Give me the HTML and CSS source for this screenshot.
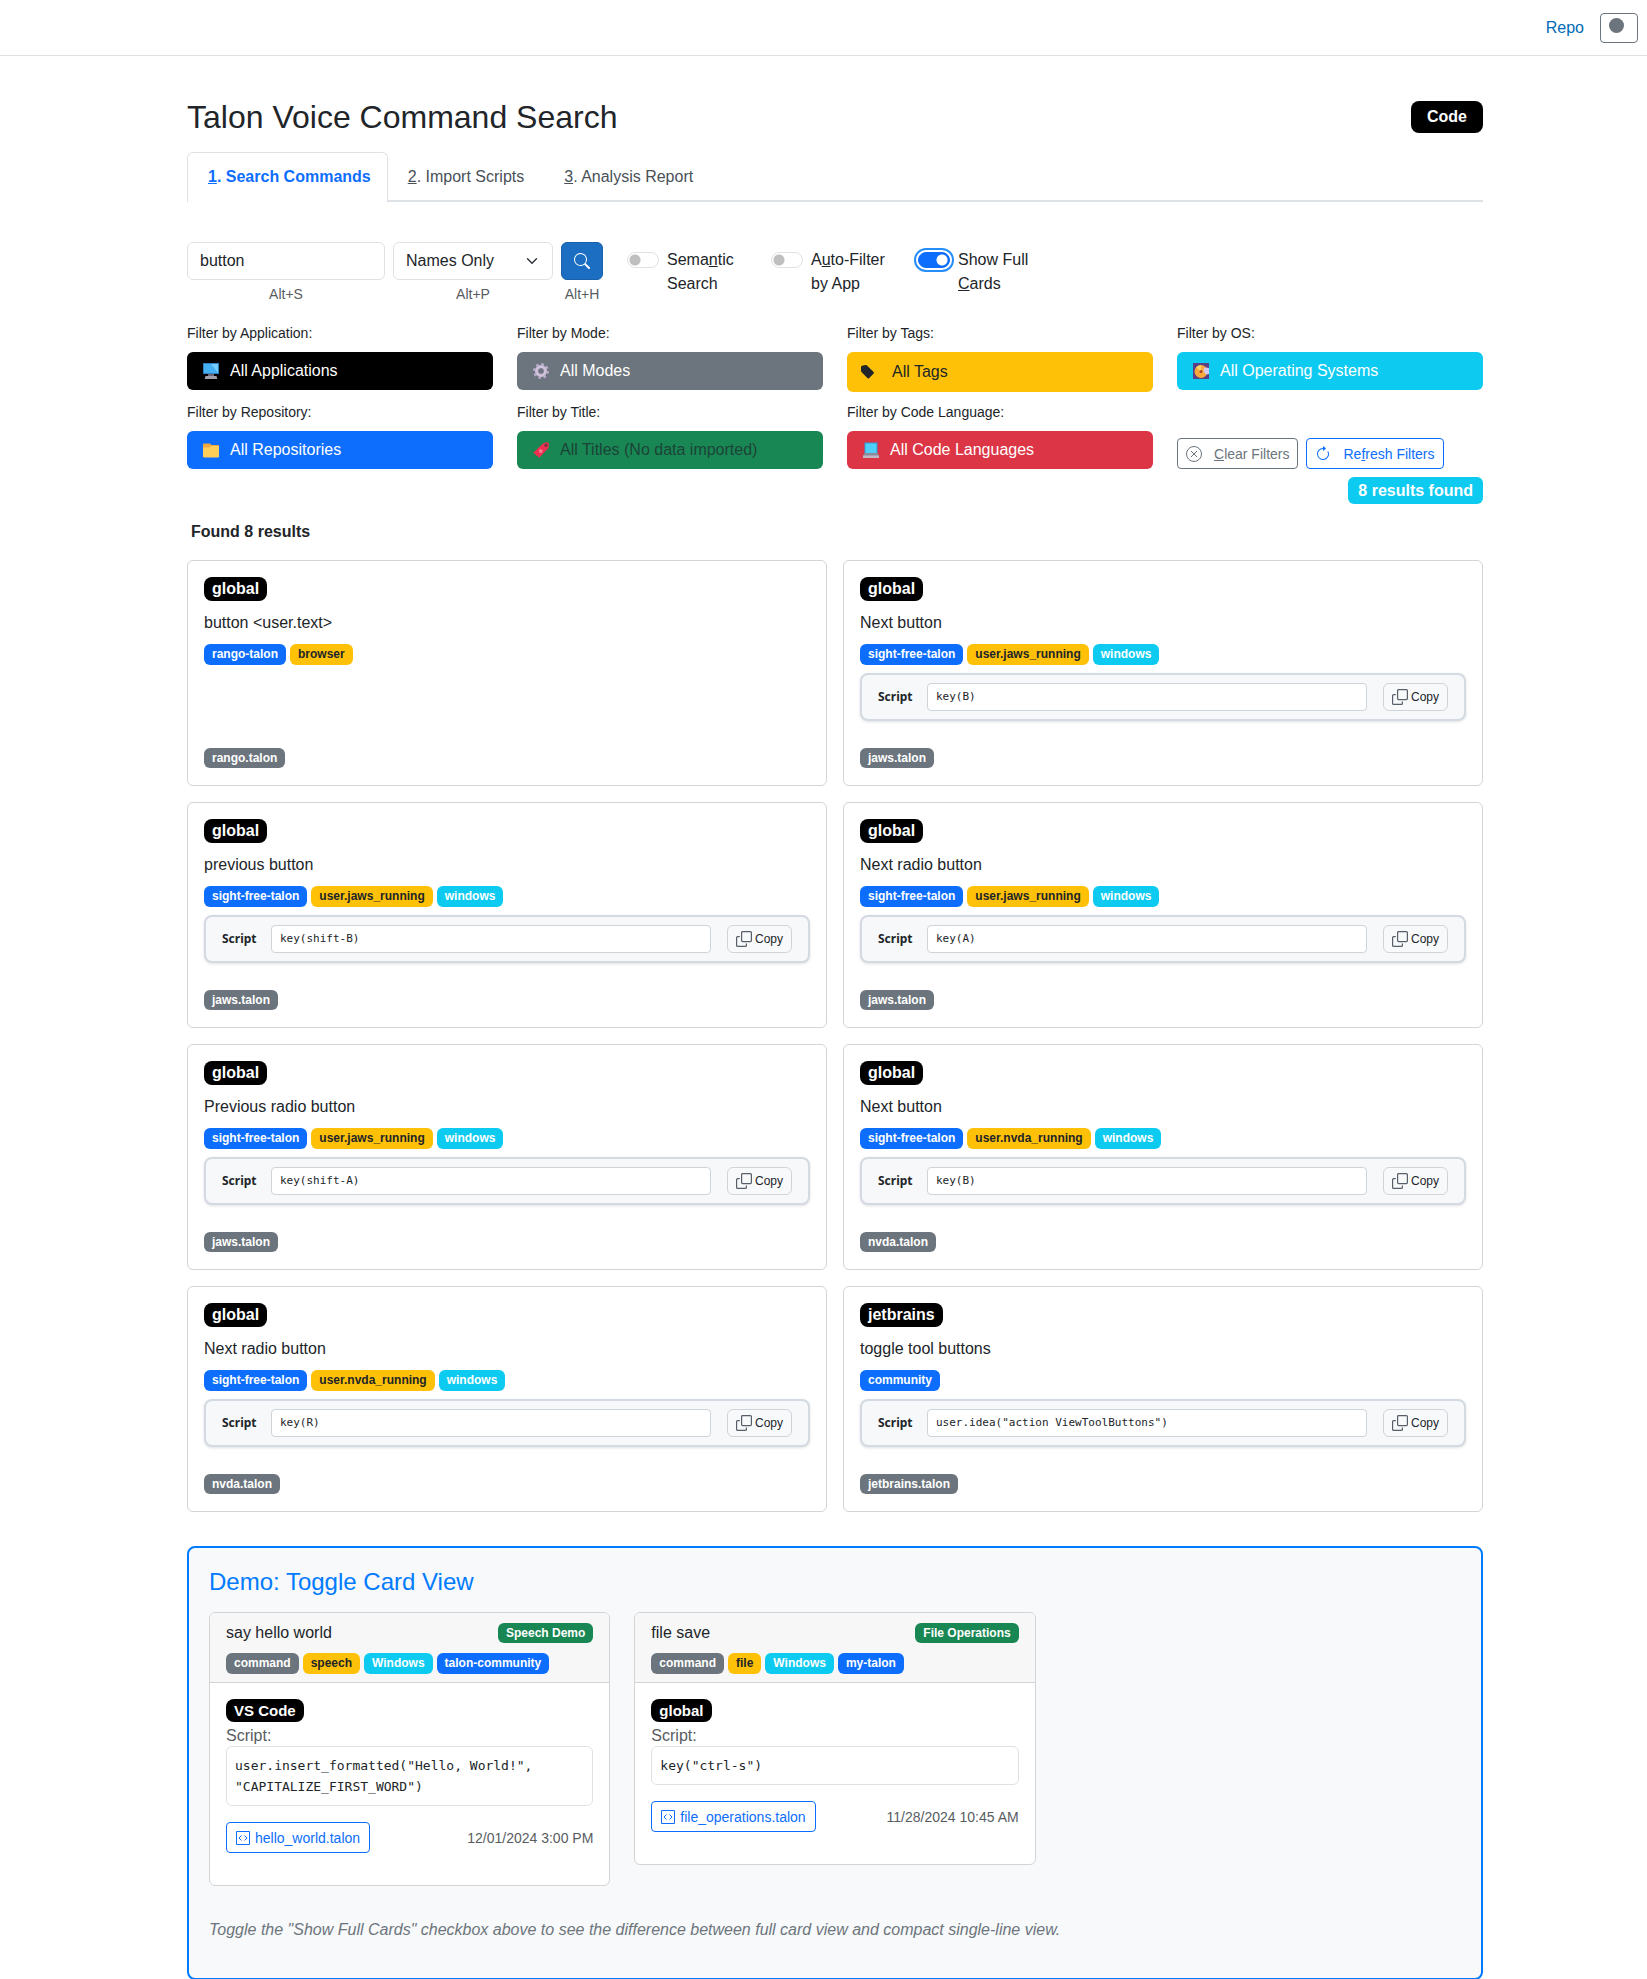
FILE: index.html
```html
<!DOCTYPE html>
<html lang="en">
<head>
<meta charset="utf-8">
<meta name="viewport" content="width=device-width, initial-scale=1">
<title>Talon Voice Command Search</title>
<link rel="stylesheet" href="styles.css">
</head>
<body>
<svg class="sprite" aria-hidden="true">
  <symbol id="copy" viewBox="0 0 16 16"><path fill="none" stroke="currentColor" stroke-width="1.2" d="M5.6.6h8.8a1 1 0 0 1 1 1v8a1 1 0 0 1-1 1H6.600a1 1 0 0 1-1-1v-8a1 1 0 0 1 1-1zM3.800 5.600H1.600a1 1 0 0 0-1 1v7.800a1 1 0 0 0 1 1h7.800a1 1 0 0 0 1-1v-1.900"/></symbol>
  <symbol id="code-file" viewBox="0 0 14 14"><path fill="none" stroke="currentColor" d="M.5.5h13v13H.5zM5.500 4.500L3 7l2.500 2.500M8.500 4.500L11 7 8.500 9.500"/></symbol>
</svg>

<header class="topbar">
  <a class="repo-link" href="#repo">Repo</a>
  <button class="theme-button" type="button" aria-label="Toggle theme"><svg width="15" height="15" viewBox="0 0 15 15"><circle cx="7.500" cy="7.500" r="7.500" fill="#6c757d"/></svg></button>
</header>

<main class="page">
  <div class="container">
    <div class="title-row">
      <h1>Talon Voice Command Search</h1>
      <button class="code-button" type="button">Code</button>
    </div>

    <nav class="tabs">
      <a class="tab active" href="#search"><u>1</u>. Search Commands</a>
      <a class="tab" href="#import"><u>2</u>. Import Scripts</a>
      <a class="tab" href="#report"><u>3</u>. Analysis Report</a>
    </nav>

    <form class="search-row">
      <div class="field field-term">
        <input class="control" type="text" value="button" aria-label="Search term">
        <span class="hint">Alt+S</span>
      </div>
      <div class="field field-scope">
        <select class="control select" aria-label="Search scope"><option>Names Only</option></select>
        <span class="hint">Alt+P</span>
      </div>
      <div class="field">
        <button class="search-button" type="button" aria-label="Search"><svg width="16" height="16" viewBox="0 0 16 16" fill="#fff"><path d="M11.742 10.344a6.500 6.500 0 1 0-1.397 1.398h-.001c.03.04.062.078.098.115l3.850 3.850a1 1 0 0 0 1.415-1.414l-3.850-3.850a1.007 1.007 0 0 0-.115-.1zM12 6.500a5.500 5.500 0 1 1-11 0 5.500 5.500 0 0 1 11 0z"/></svg></button>
        <span class="hint">Alt+H</span>
      </div>
      <div class="switches">
        <div class="switch"><input type="checkbox" id="semantic"><label for="semantic">Sema<u>n</u>tic<br>Search</label></div>
        <div class="switch"><input type="checkbox" id="auto"><label for="auto">A<u>u</u>to-Filter<br>by App</label></div>
        <div class="switch"><input class="focused" type="checkbox" id="full" checked><label for="full">Show Full<br><u>C</u>ards</label></div>
      </div>
    </form>

    <section class="filters">
      <div class="filter">
        <label for="f-app">Filter by Application:</label>
        <button id="f-app" class="filter-button black" type="button"><svg width="16" height="16" viewBox="0 0 16 16"><path fill="#2f7fc0" d="M0 0h16v11H0z"/><path fill="#45b0f4" d="M1 1h14v9H1z"/><path fill="#76cdff" d="M8 1h7v9z"/><path fill="#6d6a78" d="M5 11h6v2H5z"/><path fill="#a29eac" d="M2.500 13h11l.8 3H1.700z"/></svg>All Applications</button>
      </div>
      <div class="filter">
        <label for="f-mode">Filter by Mode:</label>
        <button id="f-mode" class="filter-button gray" type="button"><svg width="16" height="16" viewBox="0 0 16 16" fill="none"><circle cx="8" cy="8" r="6.800" stroke="#b9a9cc" stroke-width="2.400" stroke-dasharray="2.700 2.640"/><circle cx="8" cy="8" r="4.300" stroke="#cdc2da" stroke-width="3.400"/><circle cx="8" cy="8" r="2.600" stroke="#8b7f99"/></svg>All Modes</button>
      </div>
      <div class="filter">
        <label for="f-tags">Filter by Tags:</label>
        <button id="f-tags" class="filter-button tall yellow" type="button"><svg width="13" height="14" viewBox="0 0 13 14"><path fill="#212529" d="M0 2Q0 1 1 .700L4.500 0q.9-.1 1.500.600L12.600 7q.6.700.1 1.400L8 13.300q-.7.600-1.400 0L.7 7.200Q0 6.500 0 5.500z"/></svg>All Tags</button>
      </div>
      <div class="filter">
        <label for="f-os">Filter by OS:</label>
        <button id="f-os" class="filter-button cyan" type="button"><svg width="16" height="16" viewBox="0 0 16 16"><path fill="#5a3f86" d="M0 0h16v16H0z"/><circle cx="8" cy="8.500" r="6.500" fill="#f9a83c"/><path fill="#ffd36b" d="M8 8.500L3 4.500A6.500 6.500 0 0 1 8 2z"/><circle cx="8" cy="8.500" r="1.500" fill="#a8452c"/><path fill="#d5c8ee" d="M11 5q2-1 5 0v6l-3 .5-2.500-3z"/></svg>All Operating Systems</button>
      </div>
      <div class="filter">
        <label for="f-repo">Filter by Repository:</label>
        <button id="f-repo" class="filter-button blue" type="button"><svg width="16" height="16" viewBox="0 0 16 16"><path fill="#f0a840" d="M0 2.500q0-1 1-1h6l1.500 1.500H15q1 0 1 1V9H0z"/><path fill="#ffce58" d="M0 5.500h6.500L8 4h8v10.500q0 1-1 1H1q-1 0-1-1z"/></svg>All Repositories</button>
      </div>
      <div class="filter">
        <label for="f-title">Filter by Title:</label>
        <button id="f-title" class="filter-button green" type="button" disabled><svg width="16" height="16" viewBox="0 0 16 16"><path fill="#ef2f50" d="M10 1.500l4-1.500 2 1.500-.5 4.500L6 16l-1.500-2.500L3 14l-.5-2L0 11z"/><circle cx="13" cy="3.300" r="1.700" fill="#7a3245"/><path fill="#ff8397" d="M7.500 6.500l1 1.500 1.700.300-1.200 1.200.200 1.700-1.500-.8-1.500.6.300-1.600-1-1.200 1.500-.2z"/></svg>All Titles (No data imported)</button>
      </div>
      <div class="filter">
        <label for="f-lang">Filter by Code Language:</label>
        <button id="f-lang" class="filter-button red" type="button"><svg width="16" height="16" viewBox="0 0 16 16"><path fill="#2f9fd8" d="M1.500.5h13V11h-13z"/><path fill="#4fd0fb" d="M2.500 1.500h11V11h-11z"/><path fill="#8f8a9b" d="M1.500 11h13L16 14H0z"/><path fill="#bdb9c6" d="M0 13.500h16V16H0z"/></svg>All Code Languages</button>
      </div>
      <div class="filter-actions">
        <button class="outline-button muted" type="button"><svg width="16" height="16" viewBox="0 0 16 16" fill="none" stroke="currentColor"><circle cx="8" cy="8" r="7.500"/><path d="M5 5l6 6M11 5l-6 6"/></svg><span><u>C</u>lear Filters</span></button>
        <button class="outline-button primary" type="button"><svg width="16" height="16" viewBox="0 0 16 16" fill="currentColor"><path d="M8 3a5 5 0 1 0 4.546 2.914.5.5 0 0 1 .908-.417A6 6 0 1 1 8 2z"/><path d="M8 4.466V.534a.25.25 0 0 1 .41-.192l2.360 1.966c.12.1.12.284 0 .384L8.410 4.658A.25.25 0 0 1 8 4.466z"/></svg><span>Re<u>f</u>resh Filters</span></button>
      </div>
    </section>

    <div class="count-row"><span class="count">8 results found</span></div>
    <p class="found">Found 8 results</p>

    <section class="results">
      <article class="card">
        <span class="app">global</span>
        <p class="name">button &lt;user.text&gt;</p>
        <div class="tags"><span class="tag blue">rango-talon</span><span class="tag yellow">browser</span></div>
        <div class="file"><span class="tag gray">rango.talon</span></div>
      </article>
      <article class="card">
        <span class="app">global</span>
        <p class="name">Next button</p>
        <div class="tags"><span class="tag blue">sight-free-talon</span><span class="tag yellow">user.jaws_running</span><span class="tag cyan">windows</span></div>
        <div class="script"><strong>Script</strong><code>key(B)</code><button class="copy" type="button"><svg width="16" height="16"><use href="#copy"/></svg>Copy</button></div>
        <div class="file"><span class="tag gray">jaws.talon</span></div>
      </article>
      <article class="card">
        <span class="app">global</span>
        <p class="name">previous button</p>
        <div class="tags"><span class="tag blue">sight-free-talon</span><span class="tag yellow">user.jaws_running</span><span class="tag cyan">windows</span></div>
        <div class="script"><strong>Script</strong><code>key(shift-B)</code><button class="copy" type="button"><svg width="16" height="16"><use href="#copy"/></svg>Copy</button></div>
        <div class="file"><span class="tag gray">jaws.talon</span></div>
      </article>
      <article class="card">
        <span class="app">global</span>
        <p class="name">Next radio button</p>
        <div class="tags"><span class="tag blue">sight-free-talon</span><span class="tag yellow">user.jaws_running</span><span class="tag cyan">windows</span></div>
        <div class="script"><strong>Script</strong><code>key(A)</code><button class="copy" type="button"><svg width="16" height="16"><use href="#copy"/></svg>Copy</button></div>
        <div class="file"><span class="tag gray">jaws.talon</span></div>
      </article>
      <article class="card">
        <span class="app">global</span>
        <p class="name">Previous radio button</p>
        <div class="tags"><span class="tag blue">sight-free-talon</span><span class="tag yellow">user.jaws_running</span><span class="tag cyan">windows</span></div>
        <div class="script"><strong>Script</strong><code>key(shift-A)</code><button class="copy" type="button"><svg width="16" height="16"><use href="#copy"/></svg>Copy</button></div>
        <div class="file"><span class="tag gray">jaws.talon</span></div>
      </article>
      <article class="card">
        <span class="app">global</span>
        <p class="name">Next button</p>
        <div class="tags"><span class="tag blue">sight-free-talon</span><span class="tag yellow">user.nvda_running</span><span class="tag cyan">windows</span></div>
        <div class="script"><strong>Script</strong><code>key(B)</code><button class="copy" type="button"><svg width="16" height="16"><use href="#copy"/></svg>Copy</button></div>
        <div class="file"><span class="tag gray">nvda.talon</span></div>
      </article>
      <article class="card">
        <span class="app">global</span>
        <p class="name">Next radio button</p>
        <div class="tags"><span class="tag blue">sight-free-talon</span><span class="tag yellow">user.nvda_running</span><span class="tag cyan">windows</span></div>
        <div class="script"><strong>Script</strong><code>key(R)</code><button class="copy" type="button"><svg width="16" height="16"><use href="#copy"/></svg>Copy</button></div>
        <div class="file"><span class="tag gray">nvda.talon</span></div>
      </article>
      <article class="card">
        <span class="app">jetbrains</span>
        <p class="name">toggle tool buttons</p>
        <div class="tags"><span class="tag blue">community</span></div>
        <div class="script"><strong>Script</strong><code>user.idea("action ViewToolButtons")</code><button class="copy" type="button"><svg width="16" height="16"><use href="#copy"/></svg>Copy</button></div>
        <div class="file"><span class="tag gray">jetbrains.talon</span></div>
      </article>
    </section>

    <section class="demo">
      <h2>Demo: Toggle Card View</h2>
      <div class="demo-cards">
        <article class="demo-card">
          <header>
            <div class="demo-title"><span>say hello world</span><span class="tag green">Speech Demo</span></div>
            <div class="tags"><span class="tag gray">command</span><span class="tag yellow">speech</span><span class="tag cyan">Windows</span><span class="tag blue">talon-community</span></div>
          </header>
          <div class="demo-body">
            <span class="app small">VS Code</span>
            <p class="script-label">Script:</p>
            <pre>user.insert_formatted("Hello, World!", "CAPITALIZE_FIRST_WORD")</pre>
            <div class="demo-foot">
              <a class="file-link" href="#hello"><svg width="14" height="14"><use href="#code-file"/></svg>hello_world.talon</a>
              <time>12/01/2024 3:00 PM</time>
            </div>
          </div>
        </article>
        <article class="demo-card">
          <header>
            <div class="demo-title"><span>file save</span><span class="tag green">File Operations</span></div>
            <div class="tags"><span class="tag gray">command</span><span class="tag yellow">file</span><span class="tag cyan">Windows</span><span class="tag blue">my-talon</span></div>
          </header>
          <div class="demo-body">
            <span class="app small">global</span>
            <p class="script-label">Script:</p>
            <pre>key("ctrl-s")</pre>
            <div class="demo-foot">
              <a class="file-link" href="#file"><svg width="14" height="14"><use href="#code-file"/></svg>file_operations.talon</a>
              <time>11/28/2024 10:45 AM</time>
            </div>
          </div>
        </article>
      </div>
      <p class="note">Toggle the "Show Full Cards" checkbox above to see the difference between full card view and compact single-line view.</p>
    </section>
  </div>
</main>
</body>
</html>
```
FILE: styles.css
```css
*, *::before, *::after { box-sizing: border-box; }

body {
  margin: 0;
  background: #fff;
  color: #212529;
  font: 16px/24px "Liberation Sans", Arial, sans-serif;
}

h1, h2, p, pre { margin: 0; }
button, input, select { font: inherit; margin: 0; }
a { text-decoration: none; }
svg { flex: none; display: block; }
.sprite { position: absolute; width: 0; height: 0; }

/* Top bar */
.topbar {
  display: flex;
  justify-content: flex-end;
  align-items: center;
  gap: 16px;
  height: 56px;
  padding-right: 9px;
  border-bottom: 1px solid #dee2e6;
}
.repo-link { color: #006bb7; }
.theme-button {
  display: flex;
  align-items: flex-start;
  width: 38px;
  height: 30px;
  padding: 4px 8px;
  border: 1px solid #6c757d;
  border-radius: 4px;
  background: #fff;
}

.page { padding-left: 23px; }
.container { max-width: 1296px; margin: 0 auto; padding-top: 42px; }

.title-row { display: flex; justify-content: space-between; align-items: center; margin-bottom: 16px; }
h1 { font-size: 32px; line-height: 38px; font-weight: 400; }
.code-button {
  height: 32px;
  padding: 0 16px;
  border: 0;
  border-radius: 8px;
  background: #000;
  color: #fff;
  font-weight: 700;
}

/* Tabs */
.tabs { display: flex; border-bottom: 2px solid #dee2e6; margin-bottom: 40px; }
.tab {
  padding: 12px 19px 11px;
  border: 1px solid transparent;
  border-bottom: 0;
  border-radius: 6px 6px 0 0;
  color: #495057;
}
.tab.active {
  margin-bottom: -2px;
  padding: 12px 16px 13px 20px;
  border-color: #dee2e6;
  background: #fff;
  color: #0d6efd;
  font-weight: 700;
}

/* Search controls */
.search-row { display: flex; gap: 8px; margin-bottom: 18px; }
.field { display: flex; flex-direction: column; gap: 4px; }
.field-term { width: 198px; }
.field-scope { width: 160px; }
.control {
  width: 100%;
  height: 38px;
  padding: 0 12px;
  border: 1px solid #dee2e6;
  border-radius: 6px;
  background: #fff;
  color: #212529;
}
.select {
  appearance: none;
  background: url("data:image/svg+xml,%3Csvg xmlns='http://www.w3.org/2000/svg' viewBox='0 0 16 16'%3E%3Cpath fill='none' stroke='%23343a40' stroke-linecap='round' stroke-linejoin='round' stroke-width='2' d='m2 5 6 6 6-6'/%3E%3C/svg%3E") no-repeat right 14px center / 12px 12px #fff;
}
.hint { font-size: 14px; line-height: 21px; text-align: center; color: #585c5f; }
.search-button {
  display: flex;
  align-items: center;
  justify-content: center;
  width: 42px;
  height: 38px;
  border: 1px solid #1861ac;
  border-radius: 6px;
  background: #1b6ec2;
}
.switches {
  display: grid;
  grid-template-columns: 120px 123px 120px;
  gap: 24px;
  padding: 6px 0 0 16px;
}
.switch { display: flex; gap: 8px; }
.switch label { flex: 1; }
.switch input {
  appearance: none;
  flex: none;
  width: 32px;
  height: 16px;
  margin-top: 4px;
  border: 1px solid #dee2e6;
  border-radius: 16px;
  background: radial-gradient(circle at 7px 7px, #bfbfbf 5px, transparent 6px) #fff;
}
.switch input:checked {
  border-color: #0d6efd;
  background: radial-gradient(circle at 23px 7px, #fff 5px, transparent 6px) #0d6efd;
}
.switch .focused { box-shadow: 0 0 0 2px #fff, 0 0 0 4px #258cfb; }

/* Filters */
.filters { display: grid; grid-template-columns: repeat(4, 1fr); gap: 10px 24px; }
.filter label { display: block; margin-bottom: 8px; font-size: 14px; line-height: 21px; }
.filter-button {
  display: flex;
  align-items: center;
  gap: 11px;
  width: 100%;
  height: 38px;
  padding: 0 16px;
  border: 0;
  border-radius: 6px;
  color: #fff;
}
.filter-button.tall { height: 40px; padding: 0 14px; gap: 18px; }
.black { background: #000; }
.gray { background: #6c757d; color: #fff; }
.yellow { background: #ffc107; color: #212529; }
.cyan { background: #0dcaf0; color: #fff; }
.blue { background: #0d6efd; color: #fff; }
.green { background: #198754; color: #fff; }
.red { background: #dc3545; }
.filter-button:disabled { color: #1b4437; }
.filter-actions { display: flex; align-items: flex-end; gap: 8px; }
.outline-button {
  display: flex;
  align-items: center;
  gap: 12px;
  height: 31px;
  padding: 0 8px;
  border: 1px solid currentColor;
  border-radius: 4px;
  background: #fff;
  font-size: 14px;
  white-space: nowrap;
}
.muted { color: #6c757d; }
.primary { color: #0d6efd; }

.count-row { display: flex; justify-content: flex-end; margin: 8px 0 16px; }
.count {
  padding: 0 10px;
  border-radius: 6px;
  background: #0dcaf0;
  color: #fff;
  font-weight: 700;
  line-height: 27px;
}
.found { padding-left: 4px; margin-bottom: 16px; font-weight: 700; }

/* Result cards */
.results { display: grid; grid-template-columns: repeat(2, 1fr); gap: 16px; margin-bottom: 34px; }
.card {
  display: flex;
  flex-direction: column;
  align-items: stretch;
  padding: 16px 16px 17px;
  border: 1px solid #d3d4d5;
  border-radius: 6px;
  background: #fff;
}
.app {
  align-self: flex-start;
  padding: 0 8px;
  border-radius: 8px;
  background: #000;
  color: #fff;
  font-weight: 700;
}
.app.small { font-size: 15px; line-height: 23px; }
.name { margin: 10px 0 9px; }
.tags { display: flex; gap: 4px; }
.tag {
  padding: 0 8px;
  border-radius: 6px;
  font-size: 12px;
  font-weight: 700;
  line-height: 21px;
}
.file { display: flex; margin-top: auto; padding-top: 27px; }
.file .tag, .demo-title .tag { line-height: 20px; }
.script {
  display: flex;
  align-items: center;
  gap: 16px;
  margin-top: 8px;
  padding: 8px 16px;
  border: 2px solid #d3dae2;
  border-radius: 8px;
  background: #f6f8fa;
  box-shadow: 0 1px 3px rgba(0, 0, 0, 0.12);
}
.script strong { width: 33px; font: 700 12px/18px "Noto Sans", sans-serif; }
.script code {
  flex: 1;
  height: 28px;
  padding: 0 8px;
  border: 1px solid #ced4da;
  border-radius: 4px;
  background: #fff;
  font: 11px/26px "DejaVu Sans Mono", monospace;
}
.copy {
  display: flex;
  align-items: center;
  gap: 3px;
  height: 28px;
  padding: 0 8px;
  border: 1px solid #ced4da;
  border-radius: 6px;
  background: #f8f9fa;
  color: #212529;
  font-size: 12px;
}
.copy svg { color: #57606a; }

/* Demo */
.demo { padding: 20px 20px 36px; border: 2px solid #007bff; border-radius: 8px; background: #f8f9fa; }
.demo h2 { margin-bottom: 16px; color: #007bff; font-size: 24px; line-height: 28px; font-weight: 400; }
.demo-cards { display: grid; grid-template-columns: repeat(3, 1fr); align-items: start; gap: 24px; margin-bottom: 32px; }
.demo-card { border: 1px solid #d3d4d5; border-radius: 6px; background: #fff; overflow: hidden; }
.demo-card header { padding: 8px 16px; border-bottom: 1px solid #d3d4d5; background: #f7f7f7; }
.demo-title { display: flex; justify-content: space-between; align-items: center; margin-bottom: 8px; }
.demo-body { display: flex; flex-direction: column; padding: 16px 16px 32px; }
.script-label { margin-top: 4px; line-height: 20px; color: #585c5f; }
.demo-body pre {
  margin-bottom: 16px;
  padding: 8px;
  border: 1px solid #dee2e6;
  border-radius: 6px;
  font: 13px/21px "DejaVu Sans Mono", monospace;
  white-space: pre-wrap;
}
.demo-foot { display: flex; justify-content: space-between; align-items: center; }
.file-link {
  display: flex;
  align-items: center;
  gap: 5px;
  height: 31px;
  padding: 0 9px;
  border: 1px solid #0d6efd;
  border-radius: 4px;
  color: #0d6efd;
  font-size: 14px;
}
.demo-foot time { color: #585c5f; font-size: 14px; }
.note { color: #6c757d; font-style: italic; }
```
